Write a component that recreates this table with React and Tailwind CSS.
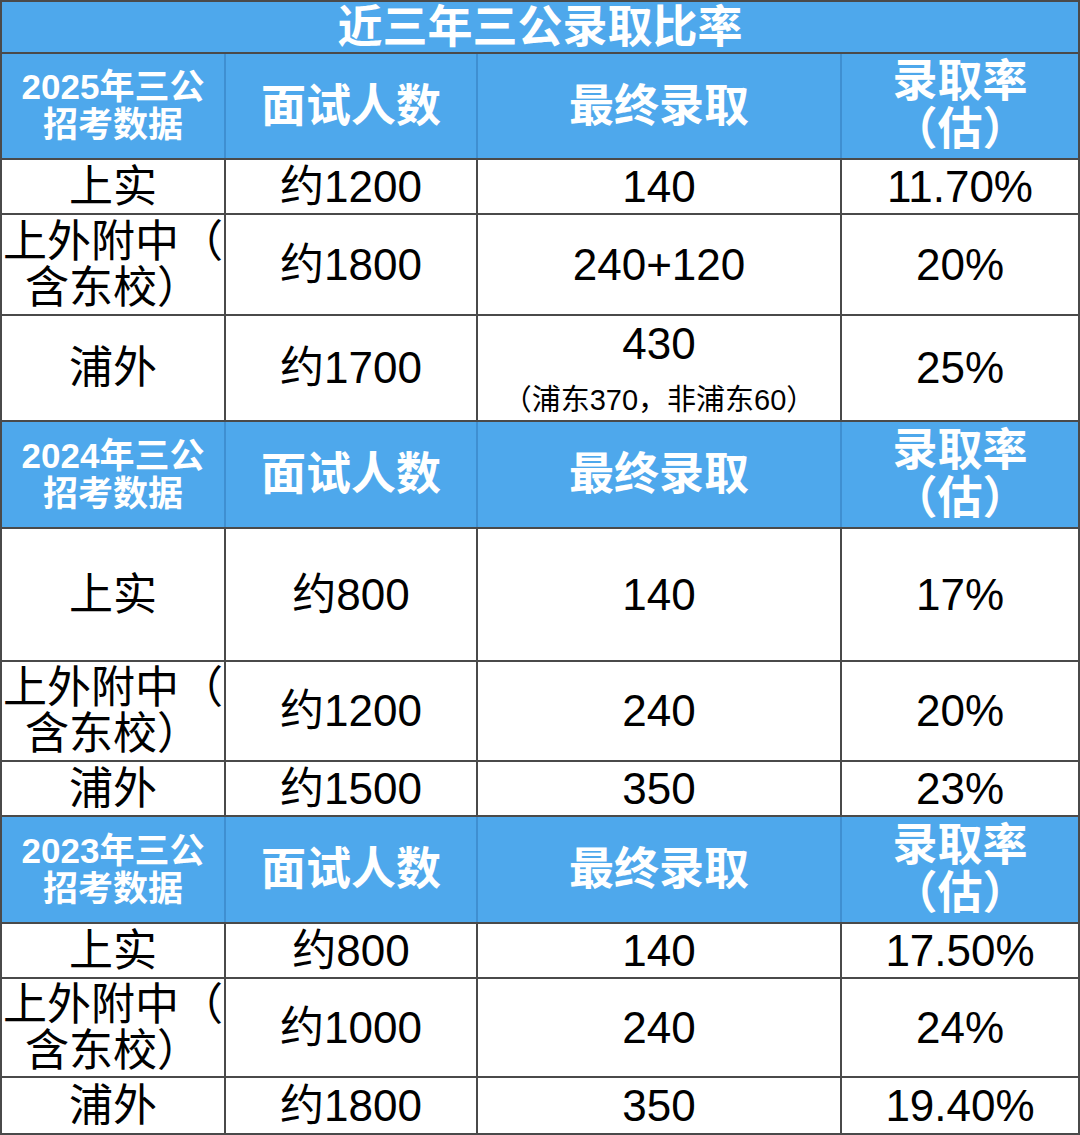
const sections = [
  {
    year: "2025",
    hdrH: "h-[106px]",
    rows: [
      { h: "h-[55px]", school: ["上实"], num: "约1200", adm: "140", rate: "11.70%" },
      { h: "h-[101px]", school: ["上外附中（", "含东校）"], num: "约1800", adm: "240+120", rate: "20%" },
      { h: "h-[106px]", school: ["浦外"], num: "约1700", adm: "430", sub: "（浦东370，非浦东60）", rate: "25%" },
    ],
  },
  {
    year: "2024",
    hdrH: "h-[107px]",
    rows: [
      { h: "h-[133px]", school: ["上实"], num: "约800", adm: "140", rate: "17%" },
      { h: "h-[100px]", school: ["上外附中（", "含东校）"], num: "约1200", adm: "240", rate: "20%" },
      { h: "h-[55px]", school: ["浦外"], num: "约1500", adm: "350", rate: "23%" },
    ],
  },
  {
    year: "2023",
    hdrH: "h-[107px]",
    rows: [
      { h: "h-[55px]", school: ["上实"], num: "约800", adm: "140", rate: "17.50%" },
      { h: "h-[99px]", school: ["上外附中（", "含东校）"], num: "约1000", adm: "240", rate: "24%" },
      { h: "h-[57px]", school: ["浦外"], num: "约1800", adm: "350", rate: "19.40%" },
    ],
  },
];

const grid = "grid grid-cols-[224px_252px_364px_238px] border-b-2 border-[#4a4a4a]";
const font = { fontFamily: '"Liberation Sans", "Noto Sans CJK SC", sans-serif' };

function HeaderRow({ year, h }) {
  const cell = "flex flex-col items-center justify-center border-r-2 border-[#3f8fd1] text-white font-bold";
  return (
    <div className={`${grid} ${h} bg-[#4ea8ec]`}>
      <div className={`${cell} text-[35px] leading-[38px]`}>
        <span>{year}年三公</span>
        <span>招考数据</span>
      </div>
      <div className={`${cell} text-[45px] leading-none`}>面试人数</div>
      <div className={`${cell} text-[45px] leading-none`}>最终录取</div>
      <div className={`${cell} !border-[#4a4a4a] text-[45px] leading-[48px]`}>
        <span>录取率</span>
        <span>（估）</span>
      </div>
    </div>
  );
}

function BodyRow({ row }) {
  const cell = "flex flex-col items-center justify-center border-r-2 border-[#4a4a4a] text-black text-[44px] text-center";
  return (
    <div className={`${grid} ${row.h} bg-white`}>
      <div className={`${cell} leading-[46px]`}>
        {row.school.map((s) => (
          <span key={s}>{s}</span>
        ))}
      </div>
      <div className={`${cell} leading-none`}>{row.num}</div>
      <div className={`${cell} leading-none`}>
        <span>{row.adm}</span>
        {row.sub && <span className="text-[29px] mt-[20px] whitespace-nowrap">{row.sub}</span>}
      </div>
      <div className={`${cell} leading-none`}>{row.rate}</div>
    </div>
  );
}

export default function App() {
  return (
    <div style={font} className="w-[1080px] h-[1135px] bg-white overflow-hidden">
      <div className="border-l-2 border-t-2 border-[#4a4a4a] flex flex-col">
        <div className="h-[52px] bg-[#4ea8ec] border-b-2 border-r-2 border-[#4a4a4a] flex items-center justify-center text-white font-bold text-[45px] leading-none">
          近三年三公录取比率
        </div>
        {sections.map((s) => (
          <div key={s.year} className="flex flex-col">
            <HeaderRow year={s.year} h={s.hdrH} />
            {s.rows.map((r, i) => (
              <BodyRow key={i} row={r} />
            ))}
          </div>
        ))}
      </div>
    </div>
  );
}
